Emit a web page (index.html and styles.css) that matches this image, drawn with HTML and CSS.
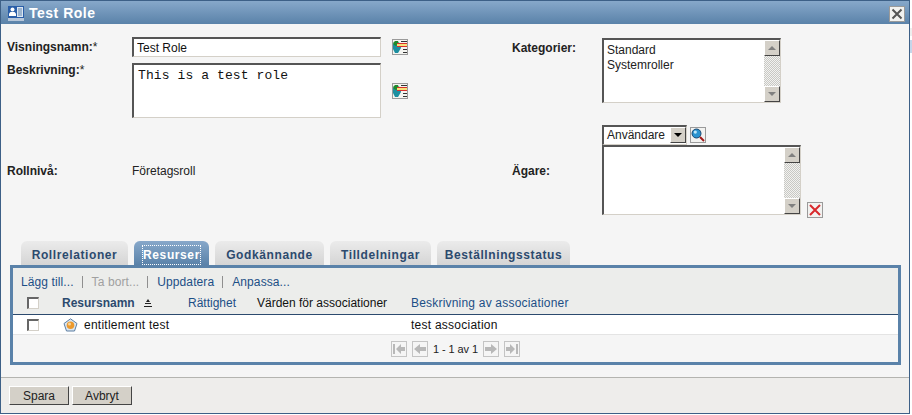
FILE: index.html
```html
<!DOCTYPE html>
<html lang="sv">
<head>
    <meta charset="UTF-8">
    <title>Test Role</title>
    <link rel="stylesheet" href="styles.css">
</head>
<body>

<div class="dialog">
    <div class="title-bar">
        <svg class="title-icon" width="16" height="15" viewBox="0 0 16 15">
            <rect x="0" y="0" width="16" height="12" fill="#2a5ea8"/>
            <circle cx="4.500" cy="3.500" r="2" fill="#fff"/>
            <path d="M1 10V7.500L2.500 6h4L8 7.500V10z" fill="#fff"/>
            <rect x="9" y="1" width="6" height="10" fill="#dbe6f2"/>
            <path d="M10 3h4M10 5h4M10 7h4M10 9h4" stroke="#5f84ad"/>
            <rect x="0" y="12" width="16" height="3" fill="#b6c6d9"/>
        </svg>
        <span class="title-text">Test Role</span>
        <button class="close-btn" type="button">
            <svg width="12" height="12" viewBox="0 0 12 12"><path d="M1.500 1.500l9 9M10.500 1.500l-9 9" stroke="#555" stroke-width="2"/></svg>
        </button>
    </div>

    <div class="form-area">
        <div class="form-left">
            <div class="field first">
                <label class="field-label">Visningsnamn:<span class="req">*</span></label>
                <input class="text-input" type="text" value="Test Role">
                <svg class="map-icon" width="16" height="16" viewBox="0 0 16 16">
                    <rect width="16" height="16" fill="#9a9a9a"/>
                    <rect x="1" y="1" width="14" height="14" fill="#f4f4f0"/>
                    <path d="M1 5l3-2 4 1 1 5-3 5H3L1 10z" fill="#1d8fa0"/>
                    <path d="M1 4l2-2 3 0 1 3-3 2-2-1z" fill="#1f8a2c"/>
                    <rect x="5" y="4" width="10" height="4" fill="#f6e27a"/>
                    <path d="M5 4.500h10M5 7.500h10" stroke="#d8302c"/>
                    <path d="M9 2.500h6M11 10.500h4M11 13.500h4" stroke="#333"/>
                </svg>
            </div>
            <div class="field">
                <label class="field-label desc-label">Beskrivning:<span class="req">*</span></label>
                <textarea class="text-area">This is a test role</textarea>
                <svg class="map-icon low" width="16" height="16" viewBox="0 0 16 16">
                    <rect width="16" height="16" fill="#9a9a9a"/>
                    <rect x="1" y="1" width="14" height="14" fill="#f4f4f0"/>
                    <path d="M1 5l3-2 4 1 1 5-3 5H3L1 10z" fill="#1d8fa0"/>
                    <path d="M1 4l2-2 3 0 1 3-3 2-2-1z" fill="#1f8a2c"/>
                    <rect x="5" y="4" width="10" height="4" fill="#f6e27a"/>
                    <path d="M5 4.500h10M5 7.500h10" stroke="#d8302c"/>
                    <path d="M9 2.500h6M11 10.500h4M11 13.500h4" stroke="#333"/>
                </svg>
            </div>
            <div class="field level">
                <label class="field-label">Rollnivå:</label>
                <span class="plain-value">Företagsroll</span>
            </div>
        </div>

        <div class="form-right">
            <div class="field">
                <label class="field-label right-label">Kategorier:</label>
                <div class="list-box cat-list">
                    <div class="list-items">
                        <div>Standard</div>
                        <div>Systemroller</div>
                    </div>
                    <div class="scroll-bar">
                        <span class="scroll-btn up"></span>
                        <span class="scroll-btn down"></span>
                    </div>
                </div>
            </div>
            <div class="owner-row">
                <label class="field-label right-label owner-label">Ägare:</label>
                <div class="owner-col">
                    <div class="owner-top">
                        <div class="combo">
                            <span class="combo-text">Användare</span>
                            <span class="combo-btn"></span>
                        </div>
                        <span class="icon-btn">
                            <svg width="14" height="14" viewBox="0 0 14 14">
                                <circle cx="5.500" cy="5.500" r="4.500" fill="#2a93d0" stroke="#17456f"/>
                                <circle cx="4.300" cy="4.100" r="1.600" fill="#bfe6f8"/>
                                <path d="M9 9l4 4" stroke="#a01818" stroke-width="2"/>
                            </svg>
                        </span>
                    </div>
                    <div class="owner-bottom">
                        <div class="list-box owner-list">
                            <div class="list-items"></div>
                            <div class="scroll-bar">
                                <span class="scroll-btn up"></span>
                                <span class="scroll-btn down"></span>
                            </div>
                        </div>
                        <span class="icon-btn remove">
                            <svg width="12" height="12" viewBox="0 0 12 12"><path d="M1 1l10 10M11 1l-10 10" stroke="#d8282c" stroke-width="2"/></svg>
                        </span>
                    </div>
                </div>
            </div>
        </div>
    </div>

    <div class="tabs">
        <span class="tab">Rollrelationer</span>
        <span class="tab active"><span class="tab-focus">Resurser</span></span>
        <span class="tab">Godkännande</span>
        <span class="tab">Tilldelningar</span>
        <span class="tab">Beställningsstatus</span>
    </div>

    <div class="panel">
        <div class="toolbar">
            <a class="tool">Lägg till...</a>
            <a class="tool disabled">Ta bort...</a>
            <a class="tool">Uppdatera</a>
            <a class="tool">Anpassa...</a>
        </div>
        <div class="table-head">
            <span class="col-check"><input class="check" type="checkbox"></span>
            <span class="col-name sort-name">Resursnamn
                <svg class="sort-mark" width="8" height="8" viewBox="0 0 8 8"><path d="M4 0L6 3H2z" fill="#222"/><path d="M1 4.500h6M0 7.500h8" stroke="#222"/></svg>
            </span>
            <span class="col-right link">Rättighet</span>
            <span class="col-values">Värden för associationer</span>
            <span class="col-desc link">Beskrivning av associationer</span>
        </div>
        <div class="table-row">
            <span class="col-check"><input class="check" type="checkbox"></span>
            <span class="col-name">
                <svg class="row-icon" width="15" height="14" viewBox="0 0 15 14">
                    <path d="M7.500 .8L14 5.500 11.500 13H3.500L1 5.500z" fill="#dce6f0" stroke="#5d7fa3"/>
                    <circle cx="7.500" cy="7.200" r="3.800" fill="#ec9a2e"/>
                    <circle cx="6.500" cy="6" r="1.500" fill="#f8d49a"/>
                </svg>
                entitlement test
            </span>
            <span class="col-right"></span>
            <span class="col-values"></span>
            <span class="col-desc">test association</span>
        </div>
        <div class="pager">
            <span class="page-btn"><svg width="14" height="14" viewBox="0 0 14 14"><path d="M1 2h2v10H1zM4 7l5-5v3h4v4H9v3z" fill="#b8b8b8"/></svg></span>
            <span class="page-btn"><svg width="14" height="14" viewBox="0 0 14 14"><path d="M1 7l6-5v3h6v4H7v3z" fill="#b8b8b8"/></svg></span>
            <span class="page-text">1 - 1 av 1</span>
            <span class="page-btn"><svg width="14" height="14" viewBox="0 0 14 14"><path d="M13 7L7 2v3H1v4h6v3z" fill="#b8b8b8"/></svg></span>
            <span class="page-btn"><svg width="14" height="14" viewBox="0 0 14 14"><path d="M13 2h-2v10h2zM10 7L5 2v3H1v4h4v3z" fill="#b8b8b8"/></svg></span>
        </div>
    </div>

    <div class="footer">
        <button class="btn" type="button">Spara</button>
        <button class="btn" type="button">Avbryt</button>
    </div>
</div>

</body>
</html>
```

FILE: styles.css
```css
html, body {
    margin: 0;
    padding: 0;
}
body {
    width: 912px;
    height: 415px;
    overflow: hidden;
    background: linear-gradient(to bottom, #fff 28px, #eee 28px, #eee 36px, #fff 36px, #fff 40px, #c5d6ea 40px, #c5d6ea 53px, #fff 53px);
    font-family: "Liberation Sans", Arial, sans-serif;
    font-size: 12px;
    color: #111;
}
.dialog {
    width: 908px;
    height: 412px;
    border: 1px solid #3d6087;
    background: #f5f5f5;
    display: flex;
    flex-direction: column;
}
.title-bar {
    height: 23px;
    flex: none;
    display: flex;
    align-items: center;
    padding-left: 7px;
    background: linear-gradient(to bottom, #87a8ca, #5a82a9);
}
.title-icon {
    margin-right: 5px;
    margin-top: 2px;
}
.title-text {
    color: #fff;
    font-weight: bold;
    font-size: 14px;
    letter-spacing: .5px;
}
.close-btn {
    margin-left: auto;
    margin-right: 4px;
    margin-top: 3px;
    width: 16px;
    height: 16px;
    padding: 0;
    display: flex;
    align-items: center;
    justify-content: center;
    background: #f2f2f0;
    border: 1px solid #9a9a9a;
}

.form-area {
    height: 217px;
    flex: none;
    display: flex;
}
.form-left {
    width: 511px;
    padding: 13px 0 0 6px;
    box-sizing: border-box;
}
.field {
    display: flex;
    margin-bottom: 6px;
}
.field-label {
    width: 125px;
    flex: none;
    font-weight: bold;
    color: #222;
    padding-top: 3px;
}
.desc-label {
    padding-top: 0;
}
.req {
    font-weight: normal;
}
.text-input, .text-area {
    box-sizing: border-box;
    width: 249px;
    background: #fff;
    border: 1px solid #d4d0c8;
    border-top: 2px solid #555;
    border-left: 2px solid #555;
    outline: none;
    margin: 0;
}
.text-input {
    height: 20px;
    padding: 0 3px;
    font-family: "Liberation Sans", Arial, sans-serif;
    font-size: 12px;
    color: #111;
}
.text-area {
    height: 55px;
    padding: 3px 4px;
    resize: none;
    font-family: "Liberation Mono", "Courier New", monospace;
    font-size: 13px;
    letter-spacing: .1px;
    color: #111;
}
.map-icon {
    margin: 2px 0 0 11px;
}
.map-icon.low {
    margin-top: 20px;
}
.level {
    margin-top: 43px;
}
.plain-value {
    padding-top: 3px;
    color: #222;
}

.form-right {
    flex: 1;
    padding-top: 14px;
}
.form-right .field {
    margin-bottom: 5px;
}
.right-label {
    width: 90px;
}
.list-box {
    box-sizing: border-box;
    display: flex;
    background: #fff;
    border: 1px solid #d4d0c8;
    border-top: 2px solid #555;
    border-left: 2px solid #555;
}
.cat-list {
    width: 179px;
    height: 65px;
}
.owner-list {
    width: 199px;
    height: 70px;
}
.list-items {
    flex: 1;
    padding: 3px 3px;
    line-height: 15px;
    color: #222;
}
.scroll-bar {
    width: 16px;
    display: flex;
    flex-direction: column;
    justify-content: space-between;
    background: repeating-conic-gradient(#c8c8c4 0 25%, #f2f2f0 0 50%) 0 0 / 2px 2px;
}
.scroll-btn {
    background: #d4d0c8;
    border: 1px solid #fff;
    border-right: 1px solid #444;
    border-bottom: 1px solid #444;
    box-sizing: border-box;
    height: 16px;
    display: flex;
    align-items: center;
    justify-content: center;
}
.scroll-btn::after {
    content: "";
    border-left: 4px solid transparent;
    border-right: 4px solid transparent;
}
.scroll-btn.up::after {
    border-bottom: 4px solid #808080;
}
.scroll-btn.down::after {
    border-top: 4px solid #808080;
}

.owner-row {
    display: flex;
    margin-top: 21px;
}
.owner-label {
    padding-top: 40px;
}
.owner-top {
    display: flex;
    align-items: center;
    height: 21px;
}
.combo {
    box-sizing: border-box;
    width: 85px;
    height: 20px;
    display: flex;
    align-items: center;
    background: #fff;
    border: 1px solid #d4d0c8;
    border-top: 2px solid #555;
    border-left: 2px solid #555;
}
.combo-text {
    flex: 1;
    padding-left: 3px;
    font-size: 12px;
    color: #222;
}
.combo-btn {
    width: 16px;
    height: 16px;
    box-sizing: border-box;
    background: #d4d0c8;
    border: 1px solid #fff;
    border-right: 1px solid #444;
    border-bottom: 1px solid #444;
    display: flex;
    align-items: center;
    justify-content: center;
}
.combo-btn::after {
    content: "";
    border-left: 4px solid transparent;
    border-right: 4px solid transparent;
    border-top: 4px solid #000;
}
.icon-btn {
    box-sizing: border-box;
    width: 16px;
    height: 16px;
    margin-left: 3px;
    display: flex;
    align-items: center;
    justify-content: center;
    background: #f2f2f0;
    border: 1px solid #9a9a9a;
}
.owner-bottom {
    display: flex;
    align-items: flex-end;
}
.icon-btn.remove {
    margin: 0 0 -3px 6px;
}

.tabs {
    height: 24px;
    flex: none;
    display: flex;
    gap: 6px;
    padding-left: 20px;
}
.tab {
    height: 24px;
    box-sizing: border-box;
    padding-top: 7px;
    text-align: center;
    border-radius: 6px 6px 0 0;
    background: linear-gradient(to bottom, #ebebeb, #d5d5d5);
    color: #2c4a6e;
    font-weight: bold;
    font-size: 12px;
    line-height: 14px;
    letter-spacing: .6px;
}
.tab:nth-child(1) { width: 107px; }
.tab:nth-child(2) { width: 75px; }
.tab:nth-child(3) { width: 109px; }
.tab:nth-child(4) { width: 101px; }
.tab:nth-child(5) { width: 133px; }
.tab.active {
    background: linear-gradient(to bottom, #87a8ca, #5a82a9);
    color: #fff;
}
.tab-focus {
    outline: 1px dotted #fff;
    padding: 2px 0;
}

.panel {
    width: 891px;
    height: 100px;
    flex: none;
    box-sizing: border-box;
    margin-left: 9px;
    border: 3px solid #5a82a9;
    background: #f5f5f5;
    display: flex;
    flex-direction: column;
}
.toolbar {
    height: 24px;
    flex: none;
    box-sizing: border-box;
    display: flex;
    align-items: center;
    padding: 3px 0 0 8px;
    background: #ecedeb;
}
.tool {
    color: #1c4f86;
    padding-right: 8px;
    margin-right: 9px;
    border-right: 1px solid #8f8f8f;
    line-height: 12px;
    letter-spacing: .1px;
}
.tool:last-child {
    border-right: none;
}
.tool.disabled {
    color: #a0a0a0;
}
.table-head, .table-row {
    display: flex;
    align-items: center;
}
.table-head {
    height: 22px;
    flex: none;
    background: #ecedeb;
    border-bottom: 1px solid #2c4a6e;
}
.table-row {
    height: 20px;
    flex: none;
    box-sizing: border-box;
    padding-top: 1px;
    background: #fff;
    border-bottom: 1px solid #e4e4e4;
    letter-spacing: .25px;
}
.col-check {
    width: 49px;
    flex: none;
    display: flex;
    padding-left: 14px;
    box-sizing: border-box;
}
.col-name {
    width: 126px;
    flex: none;
    display: flex;
    align-items: center;
}
.sort-name {
    font-weight: bold;
    color: #2c4a6e;
}
.col-right {
    width: 69px;
    flex: none;
}
.col-values {
    width: 154px;
    flex: none;
}
.col-desc {
    flex: 1;
}
.table-head .col-desc {
    letter-spacing: .2px;
}
.link {
    color: #1c4f86;
}
.sort-mark {
    margin-left: 9px;
}
.check {
    appearance: none;
    margin: 0;
    width: 12px;
    height: 12px;
    box-sizing: border-box;
    background: #fff;
    border: 1px solid #d4d0c8;
    border-top: 2px solid #666;
    border-left: 2px solid #666;
}
.row-icon {
    margin: 0 6px 0 1px;
}
.pager {
    flex: 1;
    display: flex;
    align-items: center;
    justify-content: center;
    gap: 5px;
    padding-top: 1px;
}
.page-btn {
    box-sizing: border-box;
    width: 16px;
    height: 16px;
    display: flex;
    align-items: center;
    justify-content: center;
    border: 1px solid #c4c4c4;
    background: #f5f5f5;
}
.page-text {
    font-size: 11px;
    color: #222;
    letter-spacing: -.1px;
}

.footer {
    flex: 1;
    margin-top: 12px;
    padding: 8px 0 0 8px;
    background: #eeedeb;
    border-top: 1px solid #b4b4b0;
    display: flex;
    gap: 3px;
    align-items: flex-start;
}
.btn {
    width: 60px;
    height: 19px;
    padding: 0;
    background: #d4d0c8;
    border: 1px solid #fff;
    border-right: 1px solid #444;
    border-bottom: 1px solid #444;
    font-family: "Liberation Sans", Arial, sans-serif;
    font-size: 12px;
    color: #222;
}
```
